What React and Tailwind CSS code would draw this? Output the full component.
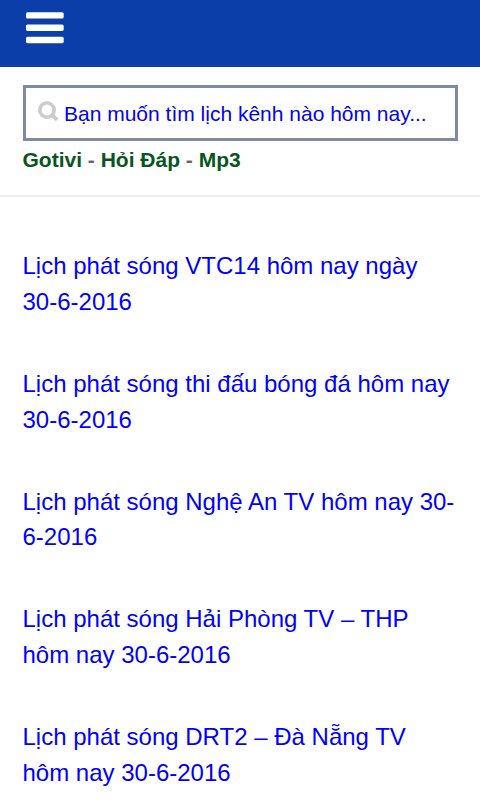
import React from 'react';

const POSTS = [
  'Lịch phát sóng VTC14 hôm nay ngày 30-6-2016',
  'Lịch phát sóng thi đấu bóng đá hôm nay 30-6-2016',
  'Lịch phát sóng Nghệ An TV hôm nay 30-6-2016',
  'Lịch phát sóng Hải Phòng TV – THP hôm nay 30-6-2016',
  'Lịch phát sóng DRT2 – Đà Nẵng TV hôm nay 30-6-2016',
];

const TopBar = () => (
  <header className="flex h-[67px] items-start bg-[#0b3ea8] pt-[8px] pl-[26px]">
    <button aria-label="Menu">
      <svg width="38" height="38" viewBox="0 0 38 38" fill="white">
        <rect x="0" y="4.2" width="37.7" height="6.4" rx="1.6" />
        <rect x="0" y="16.5" width="37.7" height="6.4" rx="1.6" />
        <rect x="0" y="28.8" width="37.7" height="6.4" rx="1.6" />
      </svg>
    </button>
  </header>
);

const SearchBox = () => (
  <div className="flex h-[56px] items-center border-[3px] border-[#7f8aa6] pl-[12px]">
    <svg className="mr-[5.5px] mb-[4px]" width="21" height="21" viewBox="0 0 21 21" fill="none" stroke="#cccccc">
      <circle cx="9" cy="9" r="7.2" strokeWidth="3.6" />
      <path d="M14 14 L19.2 18.8" strokeWidth="3.8" />
    </svg>
    <span className="pt-[2px] text-[21px] text-[#0000ff]">Bạn muốn tìm lịch kênh nào hôm nay...</span>
  </div>
);

const App = () => {
  return (
    <div className="h-screen overflow-hidden bg-white font-['Liberation_Sans',Arial,sans-serif]">
      <TopBar />
      <div className="border-b-2 border-[#eeeeee] px-[22.5px] pt-[18px] pb-[20px]">
        <SearchBox />
        <nav className="pt-[4px] text-[21px] leading-[30px] font-bold text-[#666666]">
          <a className="text-[#075520]">Gotivi</a> - <a className="text-[#075520]">Hỏi Đáp</a> -{' '}
          <a className="text-[#075520]">Mp3</a>
        </nav>
      </div>
      <main className="flex flex-col gap-[46px] px-[22.5px] pt-[51.4px]">
        {POSTS.map((title) => (
          <h2 key={title} className="text-[24px] leading-[35.8px] text-[#0000ff]">
            {title}
          </h2>
        ))}
      </main>
    </div>
  );
};

export default App;
